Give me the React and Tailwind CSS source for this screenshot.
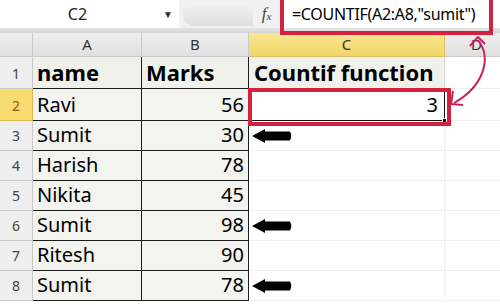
import React from "react";

const rows = [
  { n: 2, name: "Ravi", marks: 56 },
  { n: 3, name: "Sumit", marks: 30 },
  { n: 4, name: "Harish", marks: 78 },
  { n: 5, name: "Nikita", marks: 45 },
  { n: 6, name: "Sumit", marks: 98 },
  { n: 7, name: "Ritesh", marks: 90 },
  { n: 8, name: "Sumit", marks: 78 },
];

function LeftArrow({ top }) {
  return (
    <svg
      className="absolute left-[251px]"
      style={{ top }}
      width="42"
      height="16"
      viewBox="0 0 42 16"
    >
      <path d="M1 8 L14 1 L14 3.5 L39 3.5 Q41.5 8 39 12.5 L14 12.5 L14 15 Z" fill="#000" />
    </svg>
  );
}

export default function App() {
  return (
    <div className="relative w-[500px] h-[305px] overflow-hidden bg-white font-['Noto_Sans',sans-serif] text-black">
      {/* formula bar */}
      <div className="flex h-[28px] bg-[#f1f1f1]">
        <div className="relative flex w-[179px] items-center justify-center bg-white text-[16px] text-[#222]">
          <span className="pr-[24px]">C2</span>
          <span className="absolute right-[6px] top-[9px] text-[10px] leading-none text-[#333]">▼</span>
        </div>
        <div className="ml-[4px] mt-[2px] h-[24px] w-[70px] rounded-l-full bg-gradient-to-b from-[#f4f4f4] to-[#dedede]" />
        <div className="flex w-[27px] items-center justify-center font-['Liberation_Serif',serif] text-[17px] italic text-[#444]">
          f<span className="text-[11px] mt-[5px]">x</span>
        </div>
        <div className="flex flex-1 items-center bg-white pl-[12px] text-[16px] tracking-[-0.3px]">
          =COUNTIF(A2:A8,"sumit")
        </div>
      </div>
      <div className="h-[5px] bg-gradient-to-b from-[#e4e4e4] to-[#d4d4d4]" />

      {/* sheet */}
      <div className="grid grid-cols-[33px_109px_107px_196px_1fr] grid-rows-[24px_32px_32px_30px_30px_30px_30px_30px_30px]">
        {/* column headers */}
        <div className="border-r border-b border-[#c9c9c9] bg-gradient-to-b from-[#eeeeee] to-[#e0e0e0]" />
        {["A", "B"].map((c) => (
          <div
            key={c}
            className="flex items-center justify-center border-r border-b border-[#c9c9c9] bg-gradient-to-b from-[#eeeeee] to-[#e0e0e0] text-[15px] text-[#333]"
          >
            {c}
          </div>
        ))}
        <div className="flex items-center justify-center border-r border-b border-[#d9c26a] bg-gradient-to-b from-[#f8e68f] to-[#f1d66a] text-[15px] text-[#333]">
          C
        </div>
        <div className="flex items-center justify-center border-b border-[#c9c9c9] bg-gradient-to-b from-[#eeeeee] to-[#e0e0e0] pl-[8px] text-[15px] text-[#333]">
          D
        </div>

        {/* row 1 */}
        <div className="flex items-end justify-center border-r border-b border-[#c9c9c9] bg-[#efefef] pb-[4px] text-[14px] text-[#444]">
          1
        </div>
        <div className="flex items-end border-r border-b border-[#1c1c1c] bg-[#f1f1ec] pb-[1px] pl-[4px] text-[22px] font-bold leading-[30px]">
          name
        </div>
        <div className="flex items-end border-r border-b border-[#1c1c1c] bg-[#f1f1ec] pb-[1px] pl-[4px] text-[22px] font-bold leading-[30px]">
          Marks
        </div>
        <div className="flex items-end border-r border-b border-[#d8d8d8] bg-[#f1f1ec] pb-[1px] pl-[5px] text-[22px] font-bold leading-[30px]">
          Countif function
        </div>
        <div className="border-b border-[#ececec]" />

        {rows.map((r) => (
          <React.Fragment key={r.n}>
            <div
              className={
                r.n === 2
                  ? "flex items-end justify-center border-r border-b border-[#d9b84e] bg-[#f6dc6e] pb-[4px] text-[14px] text-[#8a5a10]"
                  : "flex items-end justify-center border-r border-b border-[#c9c9c9] bg-[#efefef] pb-[4px] text-[14px] text-[#444]"
              }
            >
              {r.n}
            </div>
            <div className="flex items-end border-r border-b border-[#1c1c1c] bg-[#f3f3ef] pb-[1px] pl-[4px] text-[20px] leading-[28px]">
              {r.name}
            </div>
            <div className="flex items-end justify-end border-r border-b border-[#1c1c1c] bg-[#f3f3ef] pb-[1px] pr-[4px] text-[20px] leading-[28px]">
              {r.marks}
            </div>
            {r.n === 2 ? (
              <div className="relative flex items-end justify-end border border-[#111] bg-white pb-[1px] pr-[6px] text-[20px] leading-[28px]">
                3
                <span className="absolute -bottom-[3px] -right-[3px] h-[5px] w-[5px] border border-white bg-[#111]" />
              </div>
            ) : (
              <div className="border-r border-b border-[#f0f0f0]" />
            )}
            <div className="border-b border-[#f0f0f0]" />
          </React.Fragment>
        ))}
      </div>

      {/* annotations */}
      <div className="absolute left-[280px] top-[-4px] h-[39px] w-[213px] border-[4px] border-[#d4213e]" />
      <div className="absolute left-[248px] top-[88px] h-[38px] w-[203px] border-[4px] border-[#d4213e]" />

      <svg className="absolute left-0 top-0" width="500" height="305" viewBox="0 0 500 305" fill="none">
        <path d="M478 40 C 492 58, 484 86, 454 103" stroke="#c42457" strokeWidth="2" />
        <path d="M470 46 L478 37 L485 44" stroke="#c42457" strokeWidth="2" strokeLinejoin="round" />
        <path d="M453 91 L451 104 L463 105" stroke="#c42457" strokeWidth="2" strokeLinejoin="round" />
      </svg>

      <LeftArrow top={128} />
      <LeftArrow top={218} />
      <LeftArrow top={278} />
    </div>
  );
}
